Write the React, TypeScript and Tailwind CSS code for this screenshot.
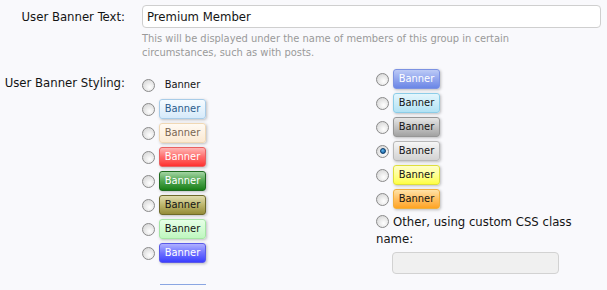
import React from 'react';

interface BannerStyle {
    id: string;
    box: string;
    text: string;
}

const leftStyles: BannerStyle[] = [
    { id: 'hidden', box: 'border-transparent', text: 'text-[#141414]' },
    { id: 'primary', box: 'border-[#a8cce8] bg-linear-to-b from-[#f6fbff] to-[#d6eafa]', text: 'text-[#2b5c8c]' },
    { id: 'secondary', box: 'border-[#f0d8b4] bg-linear-to-b from-[#fffaf3] to-[#fbe9d2]', text: 'text-[#7a6652]' },
    { id: 'red', box: 'border-[#e86060] bg-linear-to-b from-[#ffb4b4] via-[#ff6a6a] to-[#ff2e2e]', text: 'text-white' },
    { id: 'green', box: 'border-[#1f6a1f] bg-linear-to-b from-[#a2d4a2] via-[#4fa64f] to-[#157f15]', text: 'text-white' },
    { id: 'olive', box: 'border-[#6e6a2a] bg-linear-to-b from-[#e0dcae] via-[#bdb66c] to-[#958c38]', text: 'text-[#141414]' },
    { id: 'lightGreen', box: 'border-[#a4e6a4] bg-linear-to-b from-[#e6ffe6] to-[#bff7bf]', text: 'text-[#141414]' },
    { id: 'blue', box: 'border-[#5a5ae8] bg-linear-to-b from-[#b0b0ff] via-[#7070ff] to-[#3c3cff]', text: 'text-white' },
];

const rightStyles: BannerStyle[] = [
    { id: 'royalBlue', box: 'border-[#7c92e2] bg-linear-to-b from-[#bccaf6] via-[#92a6ee] to-[#6a86e6]', text: 'text-white' },
    { id: 'skyBlue', box: 'border-[#8ccde8] bg-linear-to-b from-[#e4f6fd] to-[#b2e2f4]', text: 'text-[#141414]' },
    { id: 'gray', box: 'border-[#969696] bg-linear-to-b from-[#e6e6e6] via-[#c4c4c4] to-[#a2a2a2]', text: 'text-[#141414]' },
    { id: 'silver', box: 'border-[#b8b8b8] bg-linear-to-b from-[#f6f6f6] to-[#d2d2d2]', text: 'text-[#141414]' },
    { id: 'yellow', box: 'border-[#dede3c] bg-linear-to-b from-[#ffffc8] to-[#ffff3c]', text: 'text-[#141414]' },
    { id: 'orange', box: 'border-[#f0b040] bg-linear-to-b from-[#ffe2a6] via-[#ffc060] to-[#ffa41e]', text: 'text-[#141414]' },
];

const Radio: React.FC<{ checked?: boolean }> = ({ checked }) => (
    <span className="flex items-center justify-center w-[13px] h-[13px] shrink-0 rounded-full border border-[#8a8a8a] bg-[radial-gradient(circle_at_60%_65%,#ffffff,#cfcfcf)]">
        {checked && (
            <span className="w-[6px] h-[6px] rounded-full bg-[radial-gradient(circle_at_40%_35%,#5fb6f0,#0b4f8e)] border border-[#0a3b6a]"></span>
        )}
    </span>
);

const BannerOption: React.FC<{ style: BannerStyle; checked?: boolean }> = ({ style, checked }) => (
    <div className="flex items-center h-[20px] mb-[4px]">
        <Radio checked={checked} />
        <span
            className={`ml-[4px] w-[47px] h-[20px] flex items-center justify-center rounded-[3px] border text-[11px] ${style.box} ${style.text} ${
                style.id === 'hidden' ? '' : 'shadow-[1px_1px_3px_rgba(0,0,0,0.25)]'
            }`}
        >
            Banner
        </span>
    </div>
);

export default function App() {
    return (
        <div className="w-[607px] h-[290px] overflow-hidden bg-[#f9f9fc] text-[13px] text-[#141414] font-['DejaVu_Sans_Condensed','DejaVu_Sans',sans-serif]">
            {/* Banner text */}
            <div className="flex pt-[5px]">
                <div className="w-[125px] text-right pt-[4px] leading-[16px]">User Banner Text:</div>
                <div className="ml-[17px] w-[459px]">
                    <div className="h-[23px] rounded-[4px] border border-[#cfcfcf] bg-white px-[4px] flex items-center leading-[16px]">
                        Premium Member
                    </div>
                    <p className="mt-[4px] text-[11px] leading-[14px] text-[#9a9a9a] w-[370px]">
                        This will be displayed under the name of members of this group in certain circumstances, such as with posts.
                    </p>
                </div>
            </div>

            {/* Banner styling */}
            <div className="flex mt-[9px]">
                <div className="w-[125px] text-right pt-[6px] leading-[16px] whitespace-nowrap">User Banner Styling:</div>
                <div className="ml-[17px] flex">
                    <div className="w-[234px] pt-[6px]">
                        {leftStyles.map((s) => (
                            <BannerOption key={s.id} style={s} />
                        ))}
                        <div className="ml-[18px] mt-[21px] w-[46px] h-[1px] bg-[#8aa6e2]"></div>
                    </div>
                    <div className="w-[231px]">
                        {rightStyles.map((s) => (
                            <BannerOption key={s.id} style={s} checked={s.id === 'silver'} />
                        ))}
                        <div className="leading-[17px]">
                            <span className="inline-flex align-[-2px] mr-[4px]">
                                <Radio />
                            </span>
                            Other, using custom CSS class name:
                        </div>
                        <div className="ml-[16px] mt-[5px] w-[167px] h-[22px] rounded-[4px] border border-[#d2d2d2] bg-[#f0f0f0]"></div>
                    </div>
                </div>
            </div>
        </div>
    );
}
